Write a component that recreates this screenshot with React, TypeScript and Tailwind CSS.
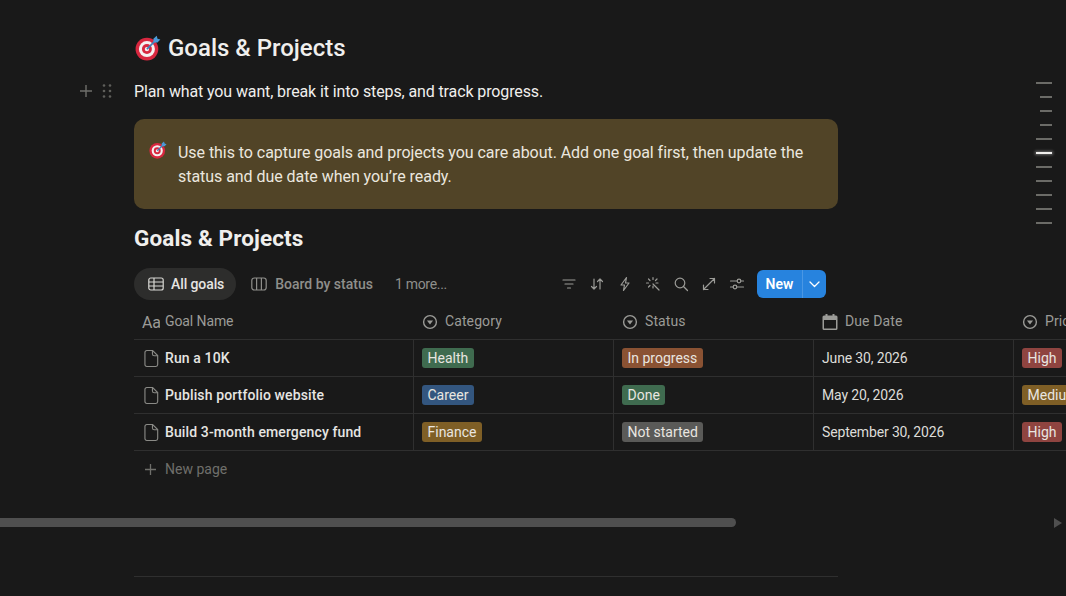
const rows = [
  {
    name: "Run a 10K",
    category: { label: "Health", color: "bg-[#3f6b4f]" },
    status: { label: "In progress", color: "bg-[#8a5233]" },
    due: "June 30, 2026",
    priority: { label: "High", color: "bg-[#8f4440]" },
  },
  {
    name: "Publish portfolio website",
    category: { label: "Career", color: "bg-[#33567f]" },
    status: { label: "Done", color: "bg-[#3f6b4f]" },
    due: "May 20, 2026",
    priority: { label: "Medium", color: "bg-[#7f5f26]" },
  },
  {
    name: "Build 3-month emergency fund",
    category: { label: "Finance", color: "bg-[#7f5f26]" },
    status: { label: "Not started", color: "bg-[#5a5a58]" },
    due: "September 30, 2026",
    priority: { label: "High", color: "bg-[#8f4440]" },
  },
];

const ticks = ["w-4", "w-3", "w-3", "w-3", "w-4", "active", "w-4", "w-4", "w-4", "w-4", "w-4"];

function TargetIcon({ size }: { size: number }) {
  return (
    <svg width={size} height={size} viewBox="0 0 24 24">
      <circle cx="11" cy="13" r="10.5" fill="#d8273f" />
      <circle cx="11" cy="13" r="7.4" fill="#f5f0f0" />
      <circle cx="11" cy="13" r="4.6" fill="#d8273f" />
      <circle cx="11" cy="13" r="2" fill="#f5f0f0" />
      <path d="M11 13 19 5" stroke="#3f7fb8" strokeWidth="1.6" />
      <path d="M17 7V3.4L20 .8l.8 2.6 2.6.8L20.8 7z" fill="#4a9ad8" />
    </svg>
  );
}

function SelectIcon() {
  return (
    <svg width="16" height="16" viewBox="0 0 16 16" className="shrink-0">
      <circle cx="8" cy="8" r="6.4" fill="none" stroke="#9b9b97" strokeWidth="1.4" />
      <path d="M4.9 6.4h6.2L8 10.6z" fill="#9b9b97" />
    </svg>
  );
}

function PageIcon() {
  return (
    <svg width="15" height="19" viewBox="0 0 16 19" fill="none" stroke="#8a8a86" strokeWidth="1.2" className="shrink-0">
      <path d="M3 1h6.2L14.6 6.4V16a2 2 0 0 1-2 2H3a2 2 0 0 1-2-2V3a2 2 0 0 1 2-2z" />
      <path d="M9 1v3.6a2 2 0 0 0 2 2h3.6" />
    </svg>
  );
}

function ToolIcon({ children }: { children: React.ReactNode }) {
  return (
    <svg width="16" height="16" viewBox="0 0 16 16" fill="none" stroke="#9b9b97" strokeWidth="1.2" strokeLinecap="round" strokeLinejoin="round">
      {children}
    </svg>
  );
}

function Tag({ label, color }: { label: string; color: string }) {
  return <span className={`${color} rounded-[3px] px-[5.5px] h-5 leading-5 text-[14px] text-[#e9e6e0] whitespace-nowrap`}>{label}</span>;
}

function HeaderCell({ icon, label, width }: { icon: React.ReactNode; label: string; width: string }) {
  return (
    <div className={`${width} shrink-0 flex items-center gap-[7px] pl-[9px] text-[14px] tracking-[0.1px] text-[#9b9b97] whitespace-nowrap`}>
      {icon}
      <span>{label}</span>
    </div>
  );
}

export default function App() {
  return (
    <div
      className="relative h-[596px] w-[1066px] overflow-hidden bg-[#191919] text-[#f0efed]"
      style={{ fontFamily: 'Roboto, sans-serif' }}
    >
      <div className="ml-[134px] w-[704px] pt-[31px]">
        <h1 className="flex h-[34px] items-center gap-[7px] pl-[1px] text-[24px] font-medium leading-[34px]">
          <TargetIcon size={26} />
          <span>Goals &amp; Projects</span>
        </h1>
        <div className="relative mt-[9px] h-[34px] text-[16px] leading-[36px] tracking-[-0.12px]">
          Plan what you want, break it into steps, and track progress.
          <div className="absolute left-[-55px] top-[9px] flex items-center gap-[9px]">
            <svg width="14" height="14" viewBox="0 0 14 14" stroke="#6f6f6b" strokeWidth="1.4">
              <path d="M7 1v12M1 7h12" />
            </svg>
            <svg width="10" height="16" viewBox="0 0 10 16" fill="#5f5f5b">
              <circle cx="2" cy="2.5" r="1.3" />
              <circle cx="8" cy="2.5" r="1.3" />
              <circle cx="2" cy="8" r="1.3" />
              <circle cx="8" cy="8" r="1.3" />
              <circle cx="2" cy="13.5" r="1.3" />
              <circle cx="8" cy="13.5" r="1.3" />
            </svg>
          </div>
        </div>
        <div className="mt-[11px] flex h-[90px] gap-[11px] rounded-[10px] bg-[#514427] pl-[15px] pr-6 pt-[21px] text-[16px] leading-6 tracking-[-0.05px] text-[#ebe7df]">
          <div className="shrink-0 pt-[1px]">
            <TargetIcon size={18} />
          </div>
          <p className="pt-[1px]">
            Use this to capture goals and projects you care about. Add one goal first, then update the status and due date when you’re ready.
          </p>
        </div>
        <h2 className="mt-[14px] h-[31px] text-[22.5px] font-bold leading-[31px] tracking-[0.12px]">Goals &amp; Projects</h2>
      </div>

      <div className="ml-[134px] mt-[14px] flex h-[32px] w-[692px] items-center text-[14px]">
        <div className="flex h-8 items-center gap-[7px] rounded-full bg-[#2d2d2c] pl-[14px] pr-3 font-medium tracking-[-0.1px] text-[#e6e5e2]">
          <svg width="16" height="14" viewBox="0 0 16 14" fill="none" stroke="#d8d7d3" strokeWidth="1.2">
            <rect x="0.8" y="1" width="14.4" height="12" rx="2" />
            <path d="M.8 5h14.4M.8 9h14.4M6 1v12" />
          </svg>
          All goals
        </div>
        <div className="ml-[15px] flex items-center gap-2 font-medium text-[#8f8f8b]">
          <svg width="16" height="14" viewBox="0 0 16 14" fill="none" stroke="#8f8f8b" strokeWidth="1.2">
            <rect x="0.8" y="1" width="14.4" height="12" rx="2.5" />
            <path d="M5.6 1v12M10.4 1v12" />
          </svg>
          Board by status
        </div>
        <span className="ml-[22px] tracking-[-0.3px] text-[#8f8f8b]">1 more...</span>
        <div className="ml-auto flex items-center gap-[12px]">
          <ToolIcon>
            <path d="M2 4h12M4 8h8M6.5 12h3" />
          </ToolIcon>
          <ToolIcon>
            <path d="M5 13V3M2.5 10.5 5 13l2.500-2.500M11 3v10M8.500 5.500 11 3l2.500 2.500" />
          </ToolIcon>
          <ToolIcon>
            <path d="M9.500 1.500 4 9h3.500l-1 5.500L12 7H8.500z" />
          </ToolIcon>
          <ToolIcon>
            <path d="M8 8l6 6M8 1.500v2M8 10v2M1.500 7h2M11 7h2M3.500 3 5 4.500M12 3l-1.500 1.500M5 9.500 3.500 11" />
          </ToolIcon>
          <ToolIcon>
            <circle cx="7" cy="7" r="4.800" />
            <path d="m10.500 10.500 4 4" />
          </ToolIcon>
          <ToolIcon>
            <path d="M9 2.500h4.500V7M13.500 2.500l-11 11M2.500 9v4.500H7" />
          </ToolIcon>
          <ToolIcon>
            <path d="M1.500 5h13M1.500 11h13" />
            <circle cx="10" cy="5" r="1.800" fill="#191919" />
            <circle cx="6" cy="11" r="1.800" fill="#191919" />
          </ToolIcon>
          <div className="flex h-7 w-[69px] items-center rounded-[6px] bg-[#2783de] text-white">
            <span className="flex h-full w-[46px] items-center justify-center border-r border-[#4a97e4] font-semibold">New</span>
            <svg className="ml-[6px]" width="11" height="7" viewBox="0 0 11 7" fill="none" stroke="#fff" strokeWidth="1.300" strokeLinecap="round" strokeLinejoin="round">
              <path d="m1 1 4.500 4.500L10 1" />
            </svg>
          </div>
        </div>
      </div>

      <div className="ml-[134px] mt-[4px] w-[932px] overflow-hidden">
        <div className="flex h-[36px] w-[1080px] items-center border-b border-[#2f2f2f]">
          <div className="flex w-[279px] shrink-0 items-center gap-[5px] pl-2 text-[14px] tracking-[-0.1px] text-[#9b9b97]">
            <span className="h-4 w-[18px] overflow-hidden text-[16px] leading-[18px]">Aa</span>
            <span>Goal Name</span>
          </div>
          <HeaderCell width="w-[200px]" label="Category" icon={<SelectIcon />} />
          <HeaderCell width="w-[200px]" label="Status" icon={<SelectIcon />} />
          <HeaderCell
            width="w-[200px]"
            label="Due Date"
            icon={
              <svg width="16" height="16" viewBox="0 0 16 16" fill="#9b9b97" className="shrink-0">
                <path d="M3.500 0h2v1.500h5V0h2v1.500H14A1.500 1.500 0 0 1 15.500 3v11.500A1.500 1.500 0 0 1 14 16H2a1.500 1.500 0 0 1-1.500-1.500V3A1.500 1.500 0 0 1 2 1.500h1.500zM2 6v8.500h12V6z" />
              </svg>
            }
          />
          <HeaderCell width="w-[200px]" label="Priority" icon={<SelectIcon />} />
        </div>
        {rows.map((row) => (
          <div key={row.name} className="flex h-[37px] w-[1080px] border-b border-[#2f2f2f] text-[14px]">
            <div className="flex w-[279px] shrink-0 items-center gap-[6px] pl-[10px] font-medium tracking-[0.12px] text-[#e6e5e2]">
              <PageIcon />
              <span className="whitespace-nowrap">{row.name}</span>
            </div>
            <div className="flex w-[200px] shrink-0 items-center border-l border-[#2f2f2f] pl-2">
              <Tag {...row.category} />
            </div>
            <div className="flex w-[200px] shrink-0 items-center border-l border-[#2f2f2f] pl-2">
              <Tag {...row.status} />
            </div>
            <div className="flex w-[200px] shrink-0 items-center border-l border-[#2f2f2f] pl-2 tracking-[-0.15px] text-[#dddcd8]">{row.due}</div>
            <div className="flex w-[200px] shrink-0 items-center border-l border-[#2f2f2f] pl-2">
              <Tag {...row.priority} />
            </div>
          </div>
        ))}
        <div className="flex h-[37px] items-center gap-2 pl-[10px] text-[14px] text-[#6f6f6b]">
          <svg width="13" height="13" viewBox="0 0 13 13" stroke="#6f6f6b" strokeWidth="1.300">
            <path d="M6.500 1v11M1 6.500h11" />
          </svg>
          New page
        </div>
      </div>

      <div className="mt-[30px] flex h-[9px] items-center justify-between pr-1">
        <div className="h-[9px] w-[736px] rounded-r-full bg-[#4f4f4f]" />
        <svg width="8" height="10" viewBox="0 0 8 10" fill="#4f4f4f">
          <path d="M0 0l8 5-8 5z" />
        </svg>
      </div>

      <div className="ml-[134px] mt-[49px] h-px w-[704px] bg-[#2f2f2f]" />

      <div className="absolute right-[14px] top-[82px] flex flex-col items-end gap-[12px]">
        {ticks.map((t, i) =>
          t === "active" ? (
            <div key={i} className="h-[2px] w-4 bg-[#f0efed] shadow-[0_0_3px_1px_rgba(255,255,255,0.35)]" />
          ) : t === "w-3" ? (
            <div key={i} className="h-[2px] w-3 bg-[#6b6b67]" />
          ) : (
            <div key={i} className="h-[2px] w-4 bg-[#6b6b67]" />
          ),
        )}
      </div>
    </div>
  );
}
